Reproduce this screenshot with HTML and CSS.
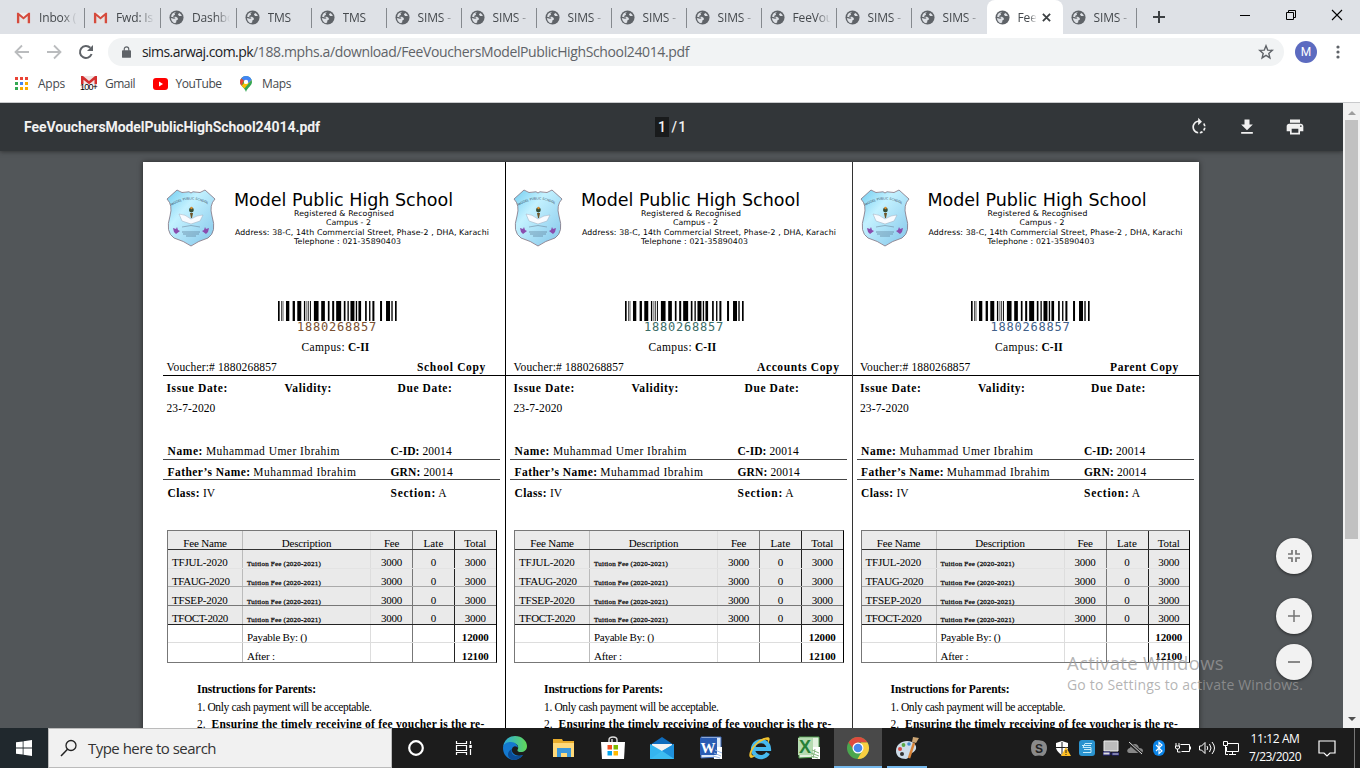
FILE: index.html
```html
<!DOCTYPE html>
<html lang="en">
<head>
<meta charset="utf-8">
<title>FeeVouchersModelPublicHighSchool24014.pdf</title>
<link rel="stylesheet" href="styles.css">
</head>
<body>
<svg width="0" height="0" class="defs">
  <defs>
    <symbol id="globe" viewBox="0 0 16 16"><circle cx="8" cy="8" r="7.500" fill="#5f6368"/><path d="M7.500 2.200 5.800 3.600l.7 1.500-1.800.9-.2 1.400 2.900-.1 1.900 1.200.2 1.700-1.700 1.100-.1 1.700-1.300 1C4.300 13.800 2.300 11.500 2 8.500l3.200.7 1.600-.2-.4-1.100-1.900-.2-2.300-.5C2.600 4.300 4.900 2.300 7.500 2.200z" fill="#dee1e6"/><path d="M10.800 3.200 9.500 4.700l1.300 1.700 2.900.1C13.200 4.800 12.100 3.800 10.800 3.200z" fill="#dee1e6"/></symbol>
    <symbol id="gmail" viewBox="0 0 16 16"><path d="M1 3h14v11H1z" fill="#eee"/><path d="M3 14V6l5 4 5-4v8z" fill="#e3e3e3"/><path d="M1 14V3h1.700L8 7.500 13.300 3H15v11h-2.500V6.400L8 10.200 3.500 6.400V14z" fill="#d54b3d"/></symbol>
    <linearGradient id="sky" x1="0" y1="0" x2="1" y2="1"><stop offset="0" stop-color="#73cdf0"/><stop offset=".35" stop-color="#c3f1ff"/><stop offset="1" stop-color="#82c5e9"/></linearGradient>
    <linearGradient id="edgeA" x1="0" y1="0" x2="1" y2="0"><stop offset="0" stop-color="#2aa9e0"/><stop offset="1" stop-color="#62d957"/></linearGradient>
    <symbol id="crest" viewBox="0 0 50 58">
      <path d="M1 10 11 1q5 4 10 2 2-1 4 1 2-2 4-1 5 2 10-2l10 9q-6 6-3 17q5 16-4 22q-10 3-17 8q-7-5-17-8q-9-6-4-22q3-11-3-17z" fill="url(#sky)" stroke="#80717f" stroke-width=".8"/>
      <path id="arc" d="M5.500 17q19.500-13 39 0" fill="none"/>
      <text class="crest-text"><textPath href="#arc">MODEL PUBLIC SCHOOL</textPath></text>
      <path d="M24 24h3l-1 5h-1z" fill="#6e5427"/><circle cx="25.400" cy="21" r="2.400" fill="#364d35"/><circle cx="25.500" cy="19" r="1.200" fill="#dc8d2b"/>
      <path d="M13 25q6 0 12 5q6-4 12-4l-3 6-9 3-9-3z" fill="#f8fbff" stroke="#9aaabd" stroke-width=".5"/>
      <path d="M16 38q9-3 18 0" fill="none" stroke="#7089a0" stroke-width=".6"/>
      <path d="m7 39 3 1 1-2 1 3 2 1-4 3-2-2zM43 39l-3 1-1-2-1 3-2 1 4 3 2-2z" fill="#8a4dae"/>
      <path d="M16 43h18M17 45h16M20 47h10" stroke="#5b7d96" stroke-width=".7"/>
    </symbol>
    <symbol id="barcode" viewBox="0 0 358 60" preserveAspectRatio="none"><path d="M0 0h5v60H0zM10 0h2v60h-2zM14 0h2v60h-2zM24 0h10v60H24zM44 0h7v60h-7zM58 0h12v60H58zM78 0h4v60h-4zM86 0h2v60h-2zM91 0h2v60h-2zM96 0h3v60h-3zM108 0h14v60h-14zM130 0h11v60h-11zM150 0h5v60h-5zM163 0h6v60h-6zM175 0h15v60h-15zM198 0h5v60h-5zM209 0h4v60h-4zM218 0h12v60h-12zM234 0h4v60h-4zM242 0h8v60h-8zM262 0h5v60h-5zM274 0h4v60h-4zM284 0h6v60h-6zM307 0h6v60h-6zM325 0h12v60h-12zM341 0h4v60h-4zM352 0h5v60h-5z"/></symbol>
  </defs>
</svg>

<header class="tabstrip">
  <nav class="tabs" id="tabs"></nav>
  <svg class="newtab" viewBox="0 0 12 12"><path d="M6 0v12M0 6h12" stroke="#3c4043" stroke-width="2"/></svg>
  <div class="winctl">
    <svg viewBox="0 0 12 12"><path d="M1 6.500h10" stroke="#000"/></svg>
    <svg viewBox="0 0 12 12"><path d="M1.500 3.500h7v7h-7zM3.500 3V1.500h7v7H9" fill="none" stroke="#000"/></svg>
    <svg viewBox="0 0 12 12"><path d="m1 1 10 10M11 1 1 11" stroke="#000" stroke-width="1.100"/></svg>
  </div>
</header>

<div class="navbar">
  <svg class="nav" viewBox="0 0 16 16"><path d="M15 8H2M8 1.500 1.500 8 8 14.500" fill="none" stroke="#babcbe" stroke-width="1.800"/></svg>
  <svg class="nav" viewBox="0 0 16 16"><path d="M1 8h13M8 1.500 14.500 8 8 14.500" fill="none" stroke="#babcbe" stroke-width="1.800"/></svg>
  <svg class="nav" viewBox="0 0 16 16"><path d="M13.600 10A6 6 0 1 1 12.300 3.800" fill="none" stroke="#5f6368" stroke-width="2"/><path d="M15 1v6H9z" fill="#5f6368"/></svg>
  <div class="omnibox">
    <svg class="lock" viewBox="0 0 10 13"><path d="M1 4.500h8q1 0 1 1V12q0 1-1 1H1q-1 0-1-1V5.500q0-1 1-1z" fill="#5f6368"/><path d="M2.500 5V3.300a2.500 2.500 0 0 1 5 0V5" fill="none" stroke="#5f6368" stroke-width="1.300"/></svg>
    <span class="url"><span class="host" data-w="111">sims.arwaj.com.pk</span><span data-w="436">/188.mphs.a/download/FeeVouchersModelPublicHighSchool24014.pdf</span></span>
    <svg class="star" viewBox="0 0 16 16"><path d="m8 1.800 1.700 4.300 4.600.3-3.500 3 1.100 4.500L8 11.400l-3.900 2.500 1.100-4.500-3.500-3 4.600-.3z" fill="none" stroke="#5f6368" stroke-width="1.400"/></svg>
  </div>
  <span class="avatar">M</span>
  <svg class="kebab" viewBox="0 0 4 14"><g fill="#5f6368"><circle cx="2" cy="2" r="1.600"/><circle cx="2" cy="7" r="1.600"/><circle cx="2" cy="12" r="1.600"/></g></svg>
</div>

<div class="bookmarks">
  <svg class="bm-apps" viewBox="0 0 13 13"><path d="M0 0h3v3H0zM5 0h3v3H5zM10 0h3v3h-3z" fill="#ea4335"/><path d="M0 5h3v3H0zM0 10h3v3H0z" fill="#34a853"/><path d="M5 5h3v3H5z" fill="#4285f4"/><path d="M10 5h3v3h-3zM5 10h3v3H5zM10 10h3v3h-3z" fill="#f9ab00"/></svg>
  <span class="bm bm1" data-w="27">Apps</span>
  <span class="bm-gmail"><svg viewBox="0 0 16 12"><path d="M0 0h16v12H0z" fill="#f0e4e3"/><path d="M0 12V0h2l6 5 6-5h2v12h-2.500V3.800L8 8.200 2.500 3.800V12z" fill="#d32f2f"/></svg><b>100+</b></span>
  <span class="bm bm2" data-w="30">Gmail</span>
  <svg class="bm-yt" viewBox="0 0 15 12"><rect width="15" height="12" rx="3" fill="#f00"/><path d="m6 3.500 4 2.500-4 2.500z" fill="#fff"/></svg>
  <span class="bm bm3" data-w="46">YouTube</span>
  <svg class="bm-map" viewBox="0 0 12 16"><path d="M6 0a6 6 0 0 1 6 6c0 4-4.500 5-6 10C4.500 11 0 10 0 6a6 6 0 0 1 6-6z" fill="#34a853"/><path d="M1.300 2.300 4 4.500 1.500 9.800Q0 8.500 0 6q0-2.200 1.300-3.700z" fill="#ea4335"/><path d="M1.500 9.800 8 3l3.500 1L4.400 12.600z" fill="#fbbc04"/><path d="M6 0a6 6 0 0 1 5.600 4L8.500 7 4 4.500 1.300 2.300A6 6 0 0 1 6 0z" fill="#4285f4"/><circle cx="6" cy="5.900" r="2.200" fill="#fff"/></svg>
  <span class="bm bm4" data-w="29">Maps</span>
</div>

<main class="viewer">
  <section class="pane">
    <div class="pdfbar">
      <div class="pdfname"><span data-w="296">FeeVouchersModelPublicHighSchool24014.pdf</span></div>
      <span class="pageno"><b>1</b><span data-w="16"> / 1</span></span>
      <div class="pdftools">
        <svg viewBox="0 0 24 24"><path d="M15.550 5.550 11 1v3.070C7.060 4.560 4 7.920 4 12s3.050 7.440 7 7.930v-2.020c-2.840-.48-5-2.940-5-5.910s2.160-5.430 5-5.910V10l4.550-4.450zM19.930 11a7.906 7.906 0 0 0-1.620-3.890l-1.420 1.420c.54.75.88 1.600 1.020 2.470h2.020zM13 17.900v2.020c1.390-.17 2.740-.71 3.900-1.610l-1.440-1.440c-.75.54-1.590.89-2.460 1.030zm3.890-2.420 1.420 1.410c.9-1.160 1.450-2.500 1.620-3.890h-2.020c-.14.87-.48 1.720-1.020 2.480z"/></svg>
        <svg viewBox="0 0 24 24"><path d="M19 9h-4V3H9v6H5l7 7 7-7zM5 18v2h14v-2H5z"/></svg>
        <svg viewBox="0 0 24 24"><path d="M19 8H5c-1.660 0-3 1.340-3 3v6h4v4h12v-4h4v-6c0-1.660-1.340-3-3-3zm-3 11H8v-5h8v5zm3-7c-.55 0-1-.45-1-1s.45-1 1-1 1 .45 1 1-.45 1-1 1zm-1-9H6v4h12V3z"/></svg>
      </div>
    </div>
    <article class="page" id="page"></article>
    <div class="zoomers">
      <button class="fab fit"><svg viewBox="0 0 12 12"><path d="M0 4h4V0M8 0v4h4M0 8h4v4M8 12V8h4" fill="none" stroke="#757575" stroke-width="1.700"/></svg></button>
      <button class="fab plus"><svg viewBox="0 0 12 12"><path d="M0 6h12M6 0v12" stroke="#757575" stroke-width="1.500"/></svg></button>
      <button class="fab"><svg viewBox="0 0 12 12"><path d="M0 6h12" stroke="#757575" stroke-width="1.700"/></svg></button>
    </div>
  </section>
  <aside class="scroll"><i class="up"></i><i class="thumb"></i><i class="down"></i></aside>
</main>

<footer class="taskbar">
  <div class="start"><svg viewBox="0 0 16 16"><path d="m0 2.300 6.700-.9v6.200H0zM7.500 1.300 16 0v7.600H7.500zM0 8.400h6.700v6.200L0 13.700zM7.500 8.400H16V16l-8.500-1.300z" fill="#fff"/></svg></div>
  <div class="search"><svg viewBox="0 0 18 18"><circle cx="11" cy="6.500" r="5" fill="none" stroke="#222" stroke-width="1.300"/><path d="M7.500 10.200 1 17" stroke="#222" stroke-width="1.500"/></svg><span data-w="128">Type here to search</span></div>
  <div class="apps">
    <span><svg viewBox="0 0 24 24"><circle cx="12" cy="12" r="6.800" fill="none" stroke="#fff" stroke-width="2.200"/></svg></span>
    <span><svg viewBox="0 0 24 24"><path d="M4.500 5v2.500h10V5M4.500 19v-2.500h10V19M4.500 9.500h10v5h-10zM18.500 5v3M18.500 13v6" fill="none" stroke="#fff" stroke-width="1.200"/><path d="M17.300 9h2.500v3h-2.500z" fill="#fff"/></svg></span>
    <span class="edge"><svg viewBox="0 0 24 24"><path d="M0 11C1 4 6 0 12 0c7 0 12 5 12 10 0 4-3 6-6 6-4 0-4-2-3-3 1-4-2-6-6-6-5 0-8 2-9 4z" fill="url(#edgeA)"/><path d="M0 12C0 8 4 6 8 6c4 0 7 3 7 6-1-2-5-3-6 1-1 5 5 8 11 6-3 4-7 5-10 5C4 23 0 18 0 12z" fill="#1479cf"/><path d="M9 13c-2 5 3 9 11 6-3 4-7 5-10 5-7-2-6-9-1-11z" fill="#0c4c94"/></svg></span>
    <span><svg viewBox="0 0 24 24"><path d="M1 3h9l1 2h11v16H1z" fill="#e8ac2c"/><path d="M1 7h21v14H1z" fill="#ffd979"/><path d="M5 12h14v9h-4v-4H9v4H5z" fill="#3b97da"/></svg></span>
    <span><svg viewBox="0 0 24 24"><path d="M8 7V4q0-3 4-3t4 3v3M11 6V3" fill="none" stroke="#ddd" stroke-width="1.400"/><path d="M0 6h24l-1 17H1z" fill="#fff"/><path d="M6.500 9H11v4.500H6.500z" fill="#f25022"/><path d="M12.500 9H17v4.500h-4.500z" fill="#7fba00"/><path d="M6.500 15H11v4.500H6.500z" fill="#00a4ef"/><path d="M12.500 15H17v4.500h-4.500z" fill="#ffb900"/></svg></span>
    <span><svg viewBox="0 0 24 24"><path d="M0 9 12 1l12 8v13H0z" fill="#0f6cbd"/><path d="M2 8h20v7H2z" fill="#f3f3f3"/><path d="m0 8 12 7L24 8v15H0z" fill="#35b5ef"/><path d="m12 15 12-7v15z" fill="#1f91dc"/><path d="M0 23h24L12 15z" fill="#3dbdf2"/></svg></span>
    <span><svg viewBox="0 0 24 24"><path d="M2 1h20v20l-20 1z" fill="#dce8f8" stroke="#3b67b5"/><path d="M14 11h9v12h-8z" fill="#fff"/><path d="M1 2h17v17H1z" fill="#2a5cb3"/><text class="office" x="1.500" y="16.500">W</text><path d="m16 14 7 3M15 17l7 3M14 20l7 2" stroke="#9bb9e4"/></svg></span>
    <span><svg viewBox="0 0 24 24"><path d="M20 17A8 8 0 1 1 21 13H7" fill="none" stroke="#46b9ee" stroke-width="4.200"/><path d="M3 22C-3 19 8 4 16 2c6-2 7 0 4 6 1-5-2-5-6-3C7 8 2 17 4 19c1 1 3 1 5-1-3 3-5 4-6 4z" fill="#f2c32e"/></svg></span>
    <span><svg viewBox="0 0 24 24"><path d="M2 1h20v20l-20 1z" fill="#e3f1df" stroke="#4f9c4c"/><path d="M14 11h9v12h-8z" fill="#fff"/><path d="M1 2h15v17H1z" fill="#b5dbb0"/><text class="office xl" x="2" y="17">X</text><path d="m15 14 7 3M14 17l8 3M14 20l7 2M18 13l-2 9" stroke="#84b67f"/></svg></span>
    <span class="active"><svg viewBox="0 0 24 24"><circle cx="12" cy="12" r="11" fill="#4ba64f"/><path d="M2.500 6.500A11 11 0 0 1 21.500 6.500H12L8 14z" fill="#dd4b3e"/><path d="M21.500 6.500A11 11 0 0 1 11.500 23l5-8.500-1.500-8z" fill="#f9cf41"/><circle cx="12" cy="12" r="5.500" fill="#fff"/><circle cx="12" cy="12" r="4.300" fill="#4787ed"/></svg></span>
    <span class="open"><svg viewBox="0 0 24 24"><path d="M1 15C1 7 10 3 17 6c6 3 5 9 0 11-3 1-2 5-6 6-6 0-10-3-10-8z" fill="#cddce9"/><circle cx="5" cy="13" r="2" fill="#d34c44"/><circle cx="8.500" cy="9" r="1.900" fill="#59a946"/><circle cx="14" cy="8" r="1.800" fill="#458cce"/><circle cx="7" cy="18" r="2" fill="#333"/><path d="m14 22 5-15" stroke="#d88438" stroke-width="2.400"/><path d="m17 6 1-5 6 1-3 5z" fill="#cda675"/></svg></span>
  </div>
  <div class="tray">
    <svg viewBox="0 0 16 16"><path d="M4 0q4 0 8 1 4 2 4 7t-4 8Q8 15 4 16q-4-2-4-8 0-6 4-8z" fill="#8a8a8a"/><text class="skype" x="4" y="12.500">S</text></svg>
    <svg viewBox="0 0 16 16"><path d="m7 1 6 2v5q-1 4-6 7-5-3-6-7V3z" fill="#fff"/><path d="M7 2v12M1 7.500h12" stroke="#222"/><path d="m11 7 5 9H6z" fill="#ffbf22"/><path d="M11 10v3M11 14v1" stroke="#222"/></svg>
    <svg viewBox="0 0 16 16"><rect width="16" height="16" rx="3" fill="#2a93cf"/><path d="M13 3.500H6l-2 4h8v2H5M4 12.500h8v-3M3 5.500h9" fill="none" stroke="#c6ecfa"/></svg>
    <svg viewBox="0 0 16 16"><path d="M1 1h14v10H1z" fill="#bbb" stroke="#eee"/><path d="M0 12h7v3H0zM9 13h7v2H9z" fill="#ddd" stroke="#23237d"/></svg>
    <svg viewBox="0 0 16 16"><path d="M2 13q-3-1-1-4 1-1 2-1 1-4 5-4 3 0 4 4 4 0 4 3 0 2-2 2z" fill="#888"/><path d="m2 3 13 11" stroke="#222" stroke-width="3"/><path d="m2 2 13 12" stroke="#ddd"/></svg>
    <svg viewBox="0 0 16 16"><rect x="2" width="12" height="16" rx="6" fill="#0a84e8"/><path d="m5 5 6 6-3 2.500v-11L11 5l-6 6" fill="none" stroke="#fff" stroke-width="1.100"/></svg>
    <svg viewBox="0 0 16 16"><path d="M5.500 4.500h9v7h-8M15.500 6.500v3M1 3v3M4 3v3M.5 6h4v2q0 1-2 1t-2-1zM2.500 9v3h3" fill="none" stroke="#fff"/></svg>
    <svg viewBox="0 0 16 16"><path d="M.5 6v4h2L6 13.500v-11L2.500 6zM8 6q1.500 2 0 4M10.500 4q3 4 0 8M13 2q5 6 0 12" fill="none" stroke="#fff"/></svg>
    <svg viewBox="0 0 16 16"><path d="M4 3.500h11.500v8H3.500V7M9.500 12v3M6 14.500h7M.5 1.500h4v4h-4zM2.500 6v8.500H5" fill="none" stroke="#fff"/></svg>
  </div>
  <div class="clock"><span data-w="49">11:12 AM</span><span data-w="52">7/23/2020</span></div>
  <svg class="notif" viewBox="0 0 18 18"><path d="M1 2h16v12h-5l-3 3-3-3H1z" fill="none" stroke="#fff" stroke-width="1.200"/></svg>
  <i class="peek"></i>
</footer>

<div class="watermark"><span class="wm1" data-w="157">Activate Windows</span><span class="wm2" data-w="236">Go to Settings to activate Windows.</span></div>
<script src="app.js"></script>
</body>
</html>
```
FILE: app.js
```js
const tabs = [
  ["gmail", "Inbox ("], ["gmail", "Fwd: Is"], ["globe", "Dashbo"], ["globe", "TMS"], ["globe", "TMS"],
  ["globe", "SIMS -"], ["globe", "SIMS -"], ["globe", "SIMS -"], ["globe", "SIMS -"], ["globe", "SIMS -"],
  ["globe", "FeeVou"], ["globe", "SIMS -"], ["globe", "SIMS -"], ["globe", "Fee", true], ["globe", "SIMS -"]
];
document.getElementById("tabs").innerHTML = tabs.map(([icon, title, active]) => `
  <div class="tab ${active ? "current" : ""}">
    <svg class="favicon" viewBox="0 0 16 16"><use href="#${icon}"/></svg>
    <span class="tabtitle">${title}</span>
    ${active ? '<svg class="close" viewBox="0 0 10 10"><path d="m1 1 8 8M9 1 1 9" stroke="#3c4043" stroke-width="2"/></svg>' : ""}
  </div>`).join("");

const t = (text, width, cls = "") => `<span class="${cls}" data-w="${width}">${text}</span>`;
const fees = [["TFJUL-2020", 55.5], ["TFAUG-2020", 57.5], ["TFSEP-2020", 55.5], ["TFOCT-2020", 56]];

const feeRows = fees.map(([name, w]) => `
  <div class="tr shaded"><div>${t(name, w)}</div><div>${t("Tuition Fee (2020-2021)", 74, "tiny")}</div>
  <div>${t("3000", 21)}</div><div>0</div><div>${t("3000", 21)}</div></div>`).join("");

const voucher = ([copy, copyWidth, tone]) => `
  <section class="voucher">
    <div class="school">
      <svg class="crest"><use href="#crest"/></svg>
      <div class="schooltext">
        <div class="name">${t("Model Public High School", 219)}</div>
        <div class="l1">${t("Registered &amp; Recognised", 100)}</div>
        <div class="l2">${t("Campus - 2", 45)}</div>
        <div class="l3">${t("Address: 38-C, 14th Commercial Street, Phase-2 , DHA, Karachi", 254)}</div>
        <div class="l4">${t("Telephone : 021-35890403", 107)}</div>
      </div>
    </div>
    <svg class="bars"><use href="#barcode"/></svg>
    <div class="code ${tone}">${t("1880268857", 80)}</div>
    <div class="campus">${t("Campus:", 43.500)} ${t("C-II", 21.500, "strong")}</div>
    <div class="copyrow">${t("Voucher:# 1880268857", 110.500)}${t(copy, copyWidth, "strong")}</div>
    <div class="dates strong"><div>${t("Issue Date:", 61.500)}</div><div>${t("Validity:", 47.500)}</div><div>${t("Due Date:", 55)}</div></div>
    <div class="dates values"><div>${t("23-7-2020", 49)}</div></div>
    <div class="person p1"><div>${t("Name:", 35.500, "strong")} ${t("Muhammad Umer Ibrahim", 134)}</div><div>${t("C-ID:", 29, "strong")} ${t("20014", 29.500)}</div></div>
    <div class="person p2"><div>${t("Father’s Name:", 83, "strong")} ${t("Muhammad Ibrahim", 103)}</div><div>${t("GRN:", 30, "strong")} ${t("20014", 29.500)}</div></div>
    <div class="person p3"><div>${t("Class:", 32.500, "strong")} ${t("IV", 12)}</div><div>${t("Section:", 45.500, "strong")} A</div></div>
    <div class="table">
      <div class="tr shaded head"><div>${t("Fee Name", 43.500)}</div><div>${t("Description", 49.500)}</div><div>${t("Fee", 15)}</div><div>${t("Late", 20)}</div><div>${t("Total", 22)}</div></div>
      ${feeRows}
      <div class="tr"><div></div><div>${t("Payable By: ()", 60)}</div><div></div><div></div><div>${t("12000", 27, "strong")}</div></div>
      <div class="tr"><div></div><div>${t("After :", 28)}</div><div></div><div></div><div>${t("12100", 27, "strong")}</div></div>
    </div>
    <div class="notes">
      <div>${t("Instructions for Parents:", 119, "strong")}</div>
      <div>${t("1. Only cash payment will be acceptable.", 174.500)}</div>
      <div class="item2"><span>2.</span>${t("Ensuring the timely receiving of fee voucher is the re-", 273, "strong")}</div>
    </div>
  </section>`;

document.getElementById("page").innerHTML = [
  ["School Copy", 69, "tone-a"], ["Accounts Copy", 82.500, "tone-b"], ["Parent Copy", 69, "tone-c"]
].map(voucher).join("");

/* Track each label out to the width given by its data-w attribute. */
document.querySelectorAll("[data-w]").forEach(el => {
  const natural = el.getBoundingClientRect().width;
  const extra = Number(el.dataset.w) - natural;
  el.style.letterSpacing = (extra / el.textContent.length).toFixed(3) + "px";
});
```
FILE: styles.css
```css
* { box-sizing: border-box; }
body { margin: 0; width: 1360px; height: 768px; overflow: hidden; display: flex; flex-direction: column; font-family: "Open Sans", "Noto Sans", sans-serif; background: #fff; }
svg { display: block; flex: none; }
.defs { position: absolute; }
[data-w] { display: inline-block; white-space: pre; }
.strong { font-weight: bold; }

.tabstrip { height: 34px; flex: none; background: #dee1e6; display: flex; align-items: center; }
.tabs { display: flex; padding-left: 8px; height: 34px; }
.tab { width: 75px; height: 34px; display: flex; align-items: center; padding-left: 8px; position: relative; color: #45494d; font-size: 12px; letter-spacing: -.15px; }
.tab:nth-child(-n+3) { width: 76px; }
.tab:first-child { width: 77px; }
.tab:nth-child(2) { width: 76px; }
.tab:nth-child(3) { width: 75.500px; }
.tab::after { content: ""; position: absolute; right: 0; top: 8px; width: 1px; height: 20px; background: #85898e; }
.tab.current::after, .tab:nth-child(13)::after { display: none; }
.tab.current { background: #fff; border-radius: 8px 8px 0 0; width: 76px; }
.tab:nth-child(15) { width: 74px; }
.favicon { width: 15px; height: 15px; margin-right: 8px; }
.tabtitle { width: 39px; overflow: hidden; white-space: nowrap; -webkit-mask-image: linear-gradient(90deg, #000 60%, transparent 98%); }
.current .tabtitle { width: 19px; margin-right: 5px; }
.close { width: 9px; height: 9px; }
.newtab { width: 12px; height: 12px; margin-left: 16.500px; }
.winctl { display: flex; gap: 34px; margin-left: 74px; padding-bottom: 5px; }
.winctl svg { width: 12px; height: 12px; }

.navbar { height: 36px; flex: none; display: flex; align-items: center; padding-left: 14px; }
.nav { width: 16px; height: 16px; margin-right: 16px; }
.nav:nth-child(3) { margin-right: 14px; }
.omnibox { width: 1176px; height: 28px; border-radius: 14px; background: #f1f3f4; display: flex; align-items: center; padding: 0 10px 0 14px; }
.lock { width: 9px; height: 12px; margin-right: 11px; }
.url { flex: 1; font-size: 14px; line-height: 20px; padding-bottom: 1px; color: #5f6368; white-space: nowrap; }
.host { color: #202124; }
.star { width: 16px; height: 16px; }
.avatar { width: 22px; height: 22px; border-radius: 50%; background: #5c6bc0; color: #fff; font: 12px/22px Roboto, sans-serif; text-align: center; margin-left: 11px; }
.kebab { width: 4px; height: 14px; margin-left: 19px; }

.bookmarks { height: 33px; flex: none; display: flex; align-items: center; padding: 0 0 5px 15px; border-bottom: 1px solid #c9cacc; font-size: 12px; color: #45494d; }
.bm-apps { width: 13px; height: 13px; margin-right: 10px; }
.bm1 { margin-right: 16px; }
.bm-gmail { width: 16px; height: 16px; position: relative; margin-right: 8px; }
.bm-gmail svg { width: 16px; height: 12px; }
.bm-gmail b { position: absolute; left: -1px; top: 8px; width: 18px; height: 7px; background: #fffc; font: 9px/7px "Liberation Sans", sans-serif; letter-spacing: -.8px; color: #000; }
.bm2 { margin-right: 17.500px; }
.bm-yt { width: 15px; height: 12px; margin-right: 8px; }
.bm3 { margin-right: 18.500px; }
.bm-map { width: 12px; height: 16px; margin-right: 10px; }

.viewer { height: 625px; flex: none; display: flex; background: #525659; overflow: hidden; }
.pane { width: 1343px; height: 625px; position: relative; overflow: hidden; }
.pdfbar { height: 48px; background: #323639; display: flex; align-items: center; padding: 0 38px 0 24px; color: #f1f1f1; font: 500 14px Roboto, sans-serif; box-shadow: 0 1px 4px #222a; position: relative; z-index: 2; }
.pdfname { width: 631px; flex: none; font-weight: 700; }
.pageno { flex: 1; white-space: pre; }
.pageno b { display: inline-block; width: 14px; height: 20px; line-height: 20px; font-weight: 500; text-align: center; background: #191b1c; }
.pdftools { display: flex; gap: 28px; }
.pdftools svg { width: 20px; height: 20px; fill: #f1f1f1; }

.page { margin: 11px 0 0 143px; width: 1056px; height: 800px; background: #fff; padding-left: 16px; display: flex; box-shadow: 0 0 5px #111a; font: 11.500px "Liberation Serif", serif; color: #000; }
.voucher { width: 347px; border-right: 1px solid #000; padding-top: 27px; overflow: hidden; }
.voucher:nth-child(2) { width: 346.500px; border-color: #333; }
.voucher:last-child { border: 0; width: 346.500px; }
.voucher + .voucher { text-indent: 0; }
.school { display: flex; height: 112px; padding-left: 7px; white-space: nowrap; }
.crest { width: 50px; height: 58px; }
.crest-text { font: 3.200px "DejaVu Sans", sans-serif; fill: #38505f; }
.schooltext { font: 7.800px/9.600px "DejaVu Sans", sans-serif; padding-left: 18px; }
.name { font-size: 17.500px; line-height: 22px; height: 19.500px; }
.l1 { padding-left: 60px; }
.l2 { padding-left: 92px; }
.l3 { padding-left: 1px; }
.l4 { padding-left: 60px; }
.bars { width: 119px; height: 20px; margin-left: 118.500px; }
.code { height: 17px; padding-left: 138px; font: 12px/12px "DejaVu Sans Mono", monospace; }
.tone-a { color: #7a5030; }
.tone-b { color: #3c6d67; }
.tone-c { color: #416089; }
.campus { height: 19px; line-height: 19px; padding-left: 142.500px; }
.copyrow { height: 19px; line-height: 20px; display: flex; justify-content: space-between; padding: 0 12px 0 7.500px; border-bottom: 1px solid #000; }
.voucher:first-child .copyrow { margin-left: 4px; padding: 0 19px 0 3.500px; }
.voucher:last-child .copyrow { padding-right: 20px; }
.dates { display: grid; grid-template-columns: 118px 113px 1fr; padding-left: 7.500px; height: 20px; line-height: 20px; margin-top: 2px; }
.dates.values { margin: 0 0 23px; }
.person { display: grid; grid-template-columns: 223px 1fr; margin: 0 4px; padding-left: 4.500px; border-bottom: 1px solid #444; }
.p1 { height: 19px; line-height: 20px; }
.p2 { height: 20px; line-height: 25px; }
.p2, .p1 { width: 337px; }
.p3 { height: 50px; line-height: 27px; border: 0; }

.table { margin-left: 8px; width: 329.500px; border: 1px solid #777; border-right-color: #000; }
.tr { display: grid; grid-template: 100% / 75px 128px 42px 42px 1fr; height: 19px; line-height: 24px; border-bottom: 1px solid #777; font-size: 11px; }
.tr:nth-child(1) { border-color: #333; }
.tr:nth-child(2) { border-color: #e3e3e3; }
.tr:nth-child(3) { height: 18px; border-color: #aaa; }
.tr:nth-child(4) { line-height: 26px; }
.tr:nth-child(5) { border-color: #222; }
.tr:nth-child(6) { height: 18px; border-color: #ddd; }
.tr:last-child { border: 0; line-height: 26px; }
.tr > div { text-align: center; border-right: 1px solid #bbb; }
.tr > div:nth-child(2) { border-color: #ddd; }
.tr > div:nth-child(3) { border-color: #777; }
.tr > div:nth-child(4) { border-color: #222; }
.tr > div:last-child { border: 0; }
.tr:not(.head) > div:nth-child(-n+2) { text-align: left; padding-left: 4px; }
.shaded { background: #eaeaea; }
.tiny { font-size: 7px; -webkit-text-stroke: .3px #222; }
.notes { margin: 16.500px 0 0 38px; line-height: 18px; white-space: nowrap; }
.item2 { display: flex; margin-top: -.5px; }
.item2 span:first-child { width: 14.500px; }

.zoomers { position: absolute; right: 31px; top: 435px; }
.fab { display: flex; align-items: center; justify-content: center; width: 36px; height: 36px; padding: 0; border: 0; border-radius: 50%; background: #f2f2f2; box-shadow: 0 1px 3px #0008; }
.fab svg { width: 12px; height: 12px; }
.fit { margin-bottom: 24px; }
.plus { margin-bottom: 10px; }
.scroll { width: 17px; background: #f1f1f1; display: flex; flex-direction: column; align-items: center; }
.up { border: 4px solid transparent; border-bottom-color: #9d9d9d; border-top: 0; margin: 8px 0 5px; }
.thumb { width: 13px; height: 419px; background: #c1c1c1; }
.down { border: 4px solid transparent; border-top-color: #505050; border-bottom: 0; margin: auto 0 7px; }

.taskbar { height: 40px; flex: none; background: #1c1c1c; display: flex; align-items: center; color: #fff; }
.start { width: 48px; height: 40px; background: #20282d; display: flex; align-items: center; padding-left: 16px; }
.start svg { width: 16px; height: 16px; }
.search { width: 344px; height: 40px; background: #f1f1f1; border: 1px solid #bbb; color: #333; font-size: 15px; display: flex; align-items: center; padding-left: 11px; gap: 10px; }
.search svg { width: 18px; height: 18px; }
.apps { display: flex; height: 40px; }
.apps span { width: 49px; display: flex; align-items: center; justify-content: center; }
.apps span:first-child { width: 48px; }
.apps span:nth-child(2) { width: 47px; }
.apps .edge { margin-left: 3px; }
.apps svg { width: 24px; height: 24px; }
.apps .active { background: #494949; border-bottom: 2px solid #76b9ed; width: 48px; padding-top: 2px; margin-left: 1px; }
.apps .open { border-bottom: 2px solid #76b9ed; width: 40px; margin-left: 5px; padding-top: 2px; }
.office { font: bold 15px "Liberation Serif", serif; fill: #fff; }
.office.xl { font-family: "Liberation Sans", sans-serif; font-size: 18px; fill: #268037; }
.skype { font: bold 12px "Liberation Sans", sans-serif; fill: #222; }
.tray { display: flex; gap: 8px; margin-left: auto; }
.tray svg { width: 16px; height: 16px; }
.clock { width: 72px; display: flex; flex-direction: column; align-items: center; font-size: 12px; line-height: 18px; }
.notif { width: 18px; height: 18px; margin: 0 18px 0 7px; }
.peek { width: 1px; height: 40px; background: #777; margin-right: 5px; }

.watermark { position: absolute; left: 1067px; top: 650px; display: flex; flex-direction: column; align-items: flex-start; color: rgba(155, 155, 155, .75); pointer-events: none; }
.wm1 { font-size: 18.500px; line-height: 25px; }
.wm2 { font-size: 14px; line-height: 20px; }
```
